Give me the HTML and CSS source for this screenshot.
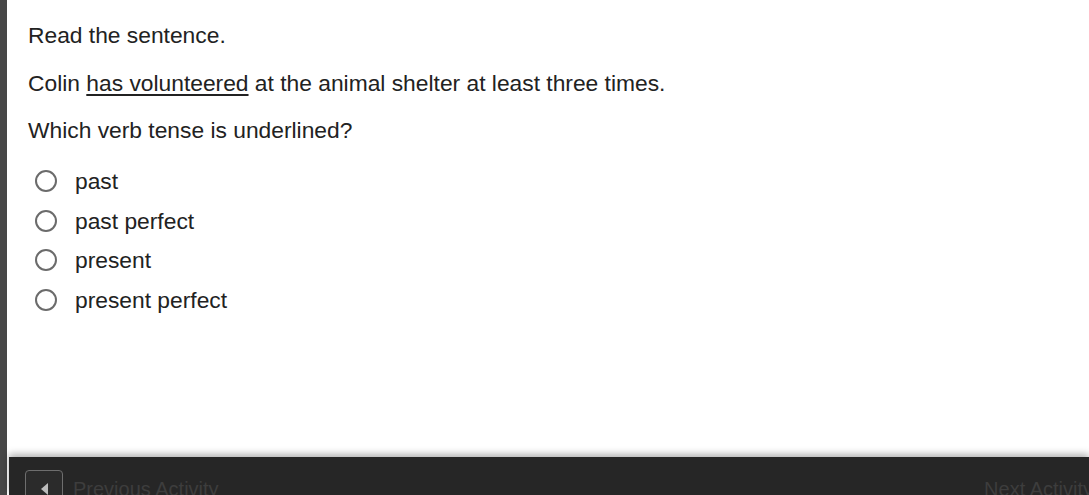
FILE: index.html
```html
<html>
<head>
    <link rel="stylesheet" href="styles.css">
</head>
<body>
    <div class="page">
        <div class="rail"></div>
        <div class="main">
            <div class="question">
                <p>Read the sentence.</p>
                <p>Colin <u>has volunteered</u> at the animal shelter at least three times.</p>
                <p>Which verb tense is underlined?</p>
                <div class="options">
                    <label class="option"><span class="radio"></span>past</label>
                    <label class="option"><span class="radio"></span>past perfect</label>
                    <label class="option"><span class="radio"></span>present</label>
                    <label class="option"><span class="radio"></span>present perfect</label>
                </div>
            </div>
            <div class="footer">
                <div class="prev">
                    <span class="prev-btn"><span class="arrow"></span></span>
                    <span class="nav-text">Previous Activity</span>
                </div>
                <span class="nav-text next">Next Activity</span>
            </div>
        </div>
    </div>
</body>
</html>
```

FILE: styles.css
```css
body {
    margin: 0;
    font-family: "Liberation Sans", Arial, sans-serif;
    background-color: #fff;
    color: #222;
    overflow: hidden;
}
.page {
    display: flex;
    height: 495px;
}
.rail {
    width: 7px;
    background-color: #474747;
    margin-right: 2px;
}
.main {
    flex: 1;
    display: flex;
    flex-direction: column;
    min-width: 0;
}
.question {
    flex: 1;
    padding: 22px 0 0 19px;
}
.question p {
    margin: 0 0 21.5px 0;
    font-size: 22.8px;
    line-height: 26px;
}
.question u {
    text-underline-offset: 3px;
    text-decoration-thickness: 1.5px;
}
.options {
    display: flex;
    flex-direction: column;
    gap: 13.5px;
    padding-top: 3.5px;
}
.option {
    display: flex;
    align-items: center;
    gap: 18px;
    padding-left: 7px;
    font-size: 22.8px;
    line-height: 26px;
}
.radio {
    width: 18px;
    height: 18px;
    border: 2px solid #6b6b6b;
    border-radius: 50%;
}
.footer {
    height: 25px;
    background-color: #262626;
    box-shadow: 0 -3px 7px rgba(0, 0, 0, 0.3);
    display: flex;
    justify-content: space-between;
    align-items: flex-start;
    padding: 13px 0 0 16px;
    overflow: hidden;
}
.prev {
    display: flex;
    align-items: flex-start;
    gap: 10px;
}
.prev-btn {
    display: flex;
    align-items: center;
    justify-content: center;
    width: 36px;
    height: 36px;
    border: 1px solid #6e6e6e;
    border-radius: 4px;
    background-color: #2b2b2b;
}
.arrow {
    width: 0;
    height: 0;
    border-top: 6px solid transparent;
    border-bottom: 6px solid transparent;
    border-right: 7px solid #bcbcbc;
}
.nav-text {
    font-size: 20px;
    line-height: 24px;
    padding-top: 7px;
    color: #3d3d3d;
}
.next {
    margin-right: -4px;
}
```
